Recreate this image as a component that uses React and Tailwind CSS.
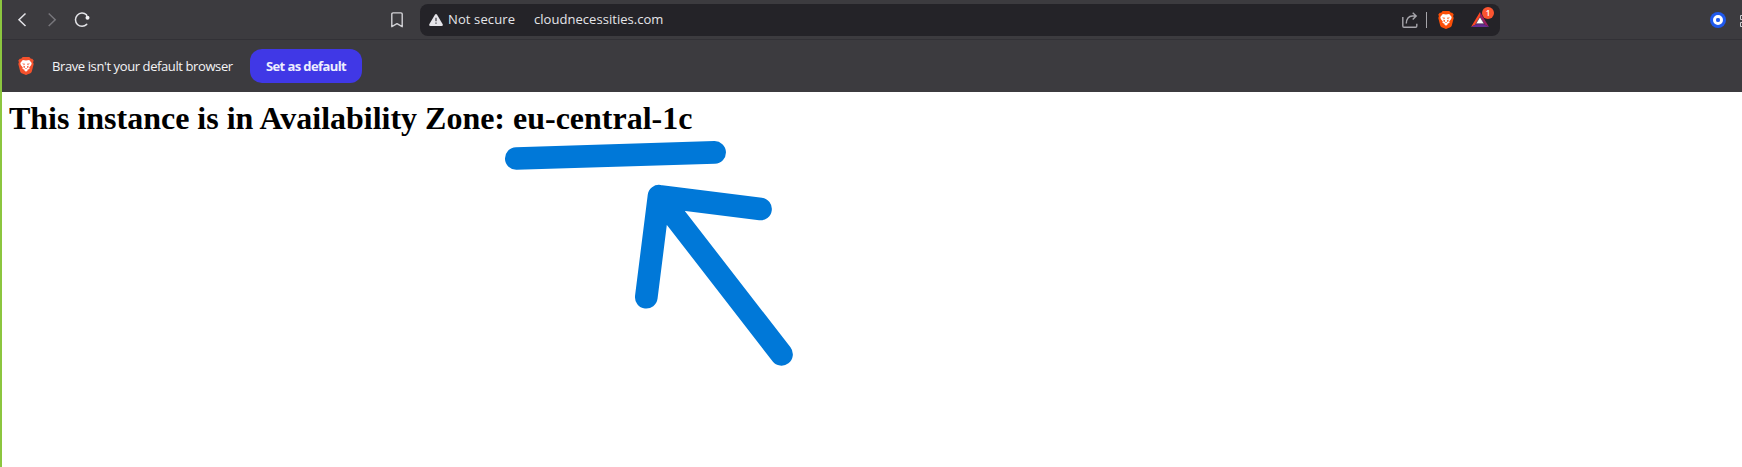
import React from "react";

function BraveLion({ className, fill }) {
  return (
    <svg className={className} viewBox="0 0 16 18" fill="none">
      <path d="M4.700 0h6.600l1.600 1.700h1.300l1.500 1.900-.6 1.600.6 1.900-1.900 7.300c-.2.800-.7 1.300-1.400 1.800l-3.800 1.600c-.4.300-.8.300-1.200 0l-3.800-1.600c-.7-.5-1.200-1-1.400-1.800L.3 7.100l.6-1.900-.6-1.600 1.500-1.900h1.300z" fill={fill} />
      <path d="M4.800 3.100 8 3.600l3.200-.5 2.500 3-.5 2-2 2.300.4 1.300-1.500.9-2.100.9-2.100-.9-1.500-.9.400-1.300-2-2.300-.5-2z" fill="#fff" />
      <path d="m6.100 13.200 1.900-.8 1.900.8L8 14.800z" fill="#fff" />
      <path d="m4.100 6.500 2.900.3-.3.900-1.500-.1zM11.900 6.500l-2.900.3.3.9 1.500-.1zM5.400 8.700l1.300.3.300 1.500-1.200.5zM10.600 8.700l-1.300.3-.3 1.500 1.200.5zM6.900 11.500 8 11l1.100.5L8 12.100z" fill={fill} />
    </svg>
  );
}

function Toolbar() {
  return (
    <header className="flex h-[39px] items-center text-[#d8d8dc]">
      <svg className="ml-[15px] h-4 w-[10px] shrink-0" viewBox="0 0 10 16" fill="none" stroke="#e4e4e8" strokeWidth="1.500">
        <path d="M8.500 1.500 2 7.700 8.500 14" />
      </svg>
      <svg className="ml-5 h-4 w-[10px] shrink-0" viewBox="0 0 10 16" fill="none" stroke="#77767b" strokeWidth="1.500">
        <path d="M1.700 1.500 8.200 7.700 1.700 14" />
      </svg>
      <svg className="ml-[17px] h-4 w-4 shrink-0" viewBox="0 0 16 16" fill="none">
        <path d="M12.700 12.400A6.600 6.600 0 1 1 12.500 2.800" stroke="#e4e4e8" strokeWidth="1.500" strokeLinecap="round" />
        <path d="M12 2.500 13.600 5" stroke="#e4e4e8" strokeWidth="1.300" />
        <circle cx="13.500" cy="5.700" r="2" fill="#f2f2f5" />
      </svg>
      <svg className="ml-[301px] h-4 w-3 shrink-0" viewBox="0 0 12 16" fill="none" stroke="#d2d2d6" strokeWidth="1.400">
        <path d="M.8 14.700V2Q.8.900 2 .9h8q1.200 0 1.200 1.100v12.700L6 11.700z" strokeLinejoin="round" />
      </svg>
      <div className="ml-[17px] flex h-8 w-[1080px] shrink-0 items-center rounded-lg bg-[#242328]">
        <svg className="ml-[9px] h-3 w-[14px]" viewBox="0 0 14 12">
          <path d="M5.900.7Q7-.7 8.100.7L13.700 10.200Q14.300 12 12.500 12h-11Q-.3 12 .3 10.200z" fill="#e6e5ea" />
          <path d="M6.300 3.700h1.400v3.600H6.300zM6.300 8.400h1.400v1.400H6.300z" fill="#55545a" />
        </svg>
        <span className="ml-[5px] w-[86px] whitespace-nowrap font-['Open_Sans',sans-serif] text-[13px] tracking-[0.12px] text-[#e5e5e9]">Not secure</span>
        <span className="w-[868px] whitespace-nowrap font-['Open_Sans',sans-serif] text-[13px] tracking-[0.04px] text-[#e5e5e9]">cloudnecessities.com</span>
        <svg className="h-4 w-4 shrink-0" viewBox="0 0 16 16" fill="none" stroke="#a7a6ac" strokeWidth="1.400">
          <path d="M.8 5v9q0 1.200 1.200 1.200h11.600q1.200 0 1.200-1.200v-2.200" />
          <path d="M4.300 11.500c0-4.500 2.500-7.500 6-7.500H14M10.700.7 14.200 4 10.700 7.400" />
        </svg>
        <span className="ml-2 h-4 w-px bg-[#a6a5aa]" />
        <BraveLion className="ml-[11px] h-[18px] w-4 shrink-0" fill="#fb4f08" />
        <div className="relative ml-[17px] h-[15px] w-[18px] shrink-0">
          <svg className="h-full w-full" viewBox="0 0 18 15">
            <path d="M9 0 0 15l9-5z" fill="#ff4724" />
            <path d="m9 0 9 15-9-5z" fill="#9e1f63" />
            <path d="m0 15 9-5 9 5z" fill="#662d91" />
            <path d="m9 4.800 4.200 7H4.800z" fill="#fff" stroke="#35243f" strokeWidth=".6" />
          </svg>
          <span className="absolute -top-[5px] left-[11px] flex h-3 w-3 items-center justify-center rounded-full bg-[#fb5430] font-['Open_Sans',sans-serif] text-[8px] font-semibold leading-none text-white">1</span>
        </div>
      </div>
      <svg className="ml-[210px] h-4 w-4 shrink-0" viewBox="0 0 16 16">
        <circle cx="8" cy="8" r="8" fill="#1f59ed" />
        <circle cx="8" cy="8" r="3.500" fill="none" stroke="#fff" strokeWidth="3" />
        <path d="M6.500 6.500h3v3h-3z" fill="#1f59ed" />
      </svg>
      <svg className="ml-[14px] mt-0.5 h-3 w-0.5 shrink-0" viewBox="0 0 2 12" fill="none" stroke="#c9c9cd">
        <path d="M2 .5H.5v4H2M2 7.500H.5v4H2" />
      </svg>
    </header>
  );
}

export default function App() {
  return (
    <div className="flex h-[467px] w-[1742px] overflow-hidden bg-white">
      <div className="w-0.5 shrink-0 bg-[#8cc63f]" />
      <div className="min-w-0 flex-1">
        <div className="bg-[#3c3b3f]">
          <Toolbar />
          <div className="flex h-[53px] items-center border-t border-[#323136]">
            <BraveLion className="ml-4 h-[18px] w-4" fill="#f4512c" />
            <span className="ml-[18px] w-[198px] whitespace-nowrap pt-px font-['Open_Sans',sans-serif] text-[13px] tracking-[-0.4px] text-[#f4f4f6]">Brave isn't your default browser</span>
            <button className="flex h-[34px] w-28 items-center justify-center whitespace-nowrap rounded-xl bg-[#4038e6] pt-px font-['Open_Sans',sans-serif] text-[13px] font-bold tracking-[-0.6px] text-[#eeeefe]">Set as default</button>
          </div>
        </div>
        <main className="relative pl-[7px] pt-2">
          <h1 className="whitespace-nowrap font-['Liberation_Serif',serif] text-[32px] font-bold leading-[37px] tracking-[-0.01px] text-black">This instance is in Availability Zone: eu-central-1c</h1>
          <svg className="absolute left-[498px] top-[43px] h-[240px] w-[300px]" viewBox="500 135 300 240" fill="none" stroke="#0078d8" strokeWidth="22.700" strokeLinecap="round" strokeLinejoin="round">
            <path d="M516.300 158.500 714.600 152.400" />
            <path d="M760.500 209 659 196.200 646.300 297.200M659 196.200 781.500 354.300" />
          </svg>
        </main>
      </div>
    </div>
  );
}
